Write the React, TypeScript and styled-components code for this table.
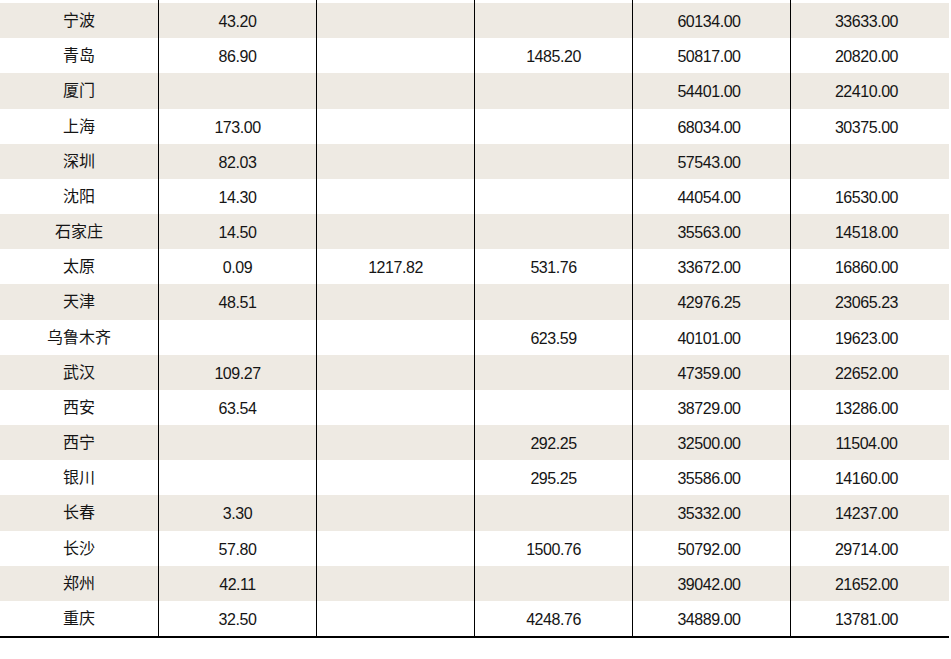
import React from "react";
import styled, { createGlobalStyle } from "styled-components";

const GlobalStyle = createGlobalStyle`
  html, body {
    margin: 0;
    padding: 0;
    background: #ffffff;
  }
  body {
    font-family: "Liberation Sans", "Noto Sans CJK SC", Arial, sans-serif;
  }
`;

const Table = styled.div`
  width: 949px;
  border-bottom: 2px solid #000;
`;

const Row = styled.div<{ $shade: boolean; $h: number }>`
  display: grid;
  grid-template-columns: 158px 158px 158px 158px 158px 1fr;
  height: ${(p) => p.$h}px;
  background: ${(p) => (p.$shade ? "#eeeae3" : "#ffffff")};
`;

const Cell = styled.div<{ $first: boolean; $num: boolean; $padRight: number }>`
  display: flex;
  align-items: center;
  justify-content: center;
  box-sizing: border-box;
  border-left: ${(p) => (p.$first ? "none" : "1px solid #000")};
  padding-top: ${(p) => (p.$num ? "3px" : "0")};
  padding-bottom: ${(p) => (p.$num ? "0" : "3px")};
  padding-right: ${(p) => p.$padRight}px;
  font-size: 16px;
  color: #151515;
  letter-spacing: ${(p) => (p.$num ? "-0.45px" : "0")};
  white-space: nowrap;
  overflow: hidden;
`;

type RowData = [string, string, string, string, string, string];

const rows: RowData[] = [
  ["宁波", "43.20", "", "", "60134.00", "33633.00"],
  ["青岛", "86.90", "", "1485.20", "50817.00", "20820.00"],
  ["厦门", "", "", "", "54401.00", "22410.00"],
  ["上海", "173.00", "", "", "68034.00", "30375.00"],
  ["深圳", "82.03", "", "", "57543.00", ""],
  ["沈阳", "14.30", "", "", "44054.00", "16530.00"],
  ["石家庄", "14.50", "", "", "35563.00", "14518.00"],
  ["太原", "0.09", "1217.82", "531.76", "33672.00", "16860.00"],
  ["天津", "48.51", "", "", "42976.25", "23065.23"],
  ["乌鲁木齐", "", "", "623.59", "40101.00", "19623.00"],
  ["武汉", "109.27", "", "", "47359.00", "22652.00"],
  ["西安", "63.54", "", "", "38729.00", "13286.00"],
  ["西宁", "", "", "292.25", "32500.00", "11504.00"],
  ["银川", "", "", "295.25", "35586.00", "14160.00"],
  ["长春", "3.30", "", "", "35332.00", "14237.00"],
  ["长沙", "57.80", "", "1500.76", "50792.00", "29714.00"],
  ["郑州", "42.11", "", "", "39042.00", "21652.00"],
  ["重庆", "32.50", "", "4248.76", "34889.00", "13781.00"],
];

const blank: RowData = ["", "", "", "", "", ""];
const padRights = [0, 0, 0, 0, 5, 7];

const TableRow: React.FC<{ data: RowData; shade: boolean; h: number }> = ({
  data,
  shade,
  h,
}) => (
  <Row $shade={shade} $h={h}>
    {data.map((v, i) => (
      <Cell key={i} $first={i === 0} $num={i > 0} $padRight={padRights[i]}>
        {v}
      </Cell>
    ))}
  </Row>
);

export default function App() {
  return (
    <>
      <GlobalStyle />
      <Table>
        <TableRow data={blank} shade={false} h={3} />
        {rows.map((r, i) => (
          <TableRow key={i} data={r} shade={i % 2 === 0} h={35.18} />
        ))}
      </Table>
    </>
  );
}
